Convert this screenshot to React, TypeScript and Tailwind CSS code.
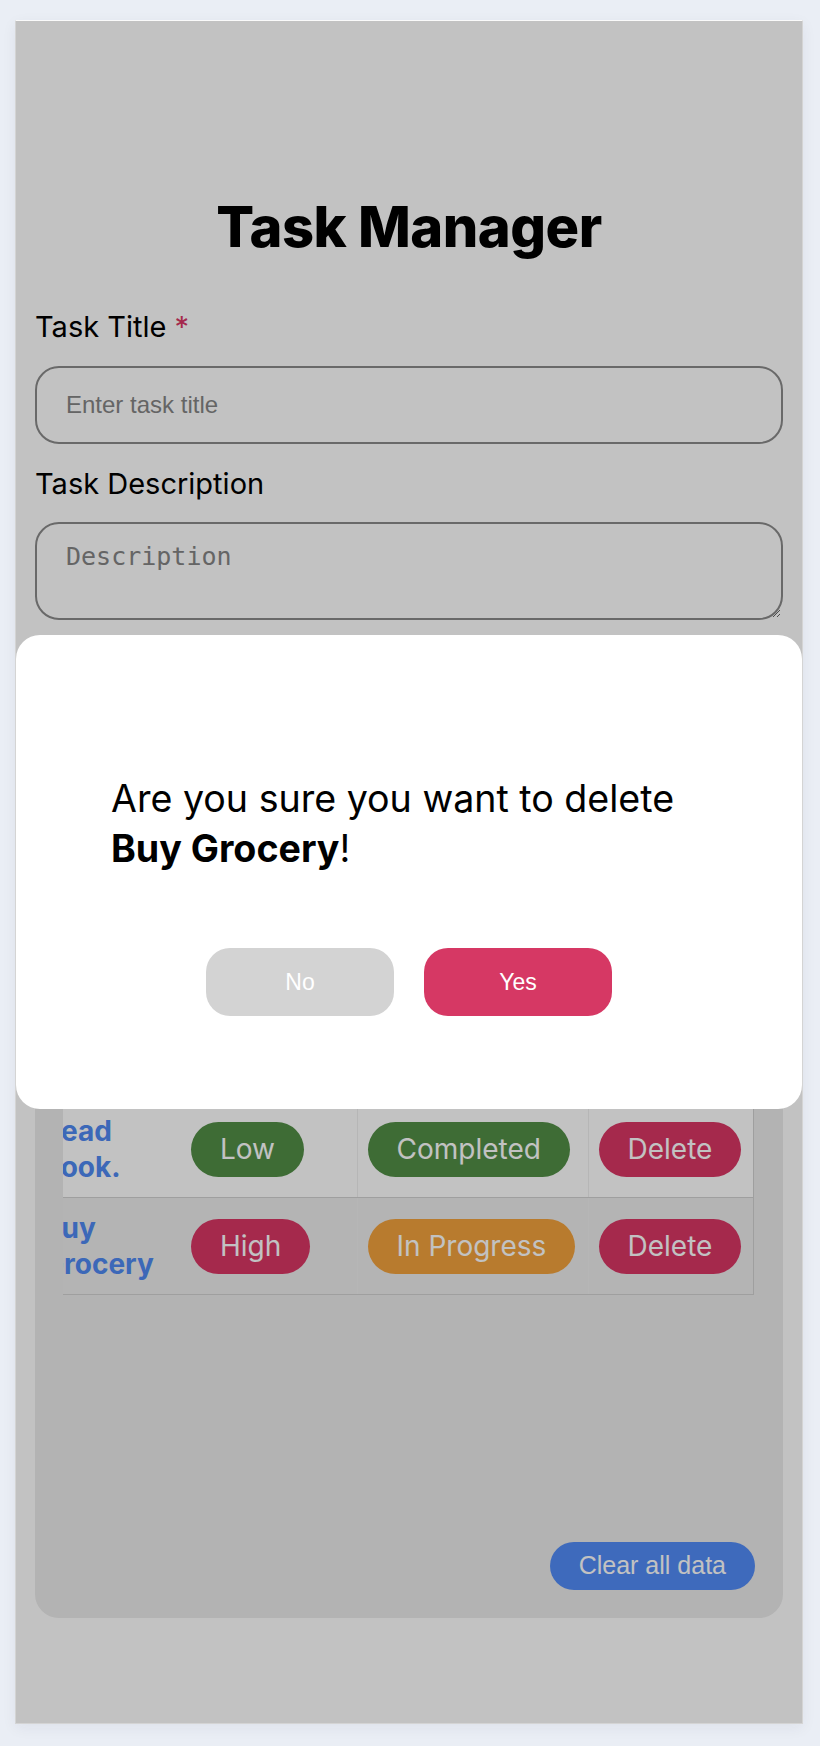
import { useLayoutEffect, useRef } from 'react'

type Priority = 'Low' | 'Medium' | 'High'
type Status = 'To Do' | 'In Progress' | 'Completed'

interface Task {
  id: number
  title: string
  priority: Priority
  status: Status
}

const tasks: Task[] = [
  { id: 1, title: 'Read book.', priority: 'Low', status: 'Completed' },
  { id: 2, title: 'Buy Grocery', priority: 'High', status: 'In Progress' },
]

const priorityColor: Record<Priority, string> = {
  Low: 'bg-[#528e46]',
  Medium: 'bg-[#f2a23d]',
  High: 'bg-[#d93665]',
}

const statusColor: Record<Status, string> = {
  'To Do': 'bg-[#8a8a8a]',
  'In Progress': 'bg-[#f2a23d]',
  Completed: 'bg-[#528e46]',
}

const inter = "font-['Inter','Noto_Sans',sans-serif]"
const arial = "font-['Liberation_Sans',Arial,sans-serif]"

function Pill({ label, color }: { label: string; color: string }) {
  return (
    <span className={`inline-block whitespace-nowrap rounded-full px-[29px] py-[10px] text-[28px] leading-[35px] text-white ${color}`}>
      {label}
    </span>
  )
}

function TaskTable() {
  const scrollRef = useRef<HTMLDivElement>(null)

  // table is wider than the panel, keep it scrolled to the right edge
  useLayoutEffect(() => {
    const el = scrollRef.current
    if (el) el.scrollLeft = el.scrollWidth
  }, [])

  return (
    <div ref={scrollRef} className="h-[472px] overflow-x-auto overflow-y-hidden [scrollbar-width:none]">
      <div className="w-[722px] pr-[2px]">
        <table className="w-[720px] table-fixed border-r border-[#d2d2d2]">
          <colgroup>
            <col className="w-[148px]" />
            <col className="w-[176px]" />
            <col className="w-[231px]" />
            <col className="w-[165px]" />
          </colgroup>
          <thead>
            <tr className="bg-[#f4f4f4] text-left text-[26px] leading-[36px]">
              <th className="border-b border-[#d2d2d2] px-[10px] py-[17px] font-semibold">Title</th>
              <th className="border-b border-[#d2d2d2] px-[10px] py-[17px] font-semibold">Priority</th>
              <th className="border-b border-l border-[#d2d2d2] px-[10px] py-[17px] font-semibold">Status</th>
              <th className="border-b border-l border-[#d2d2d2] px-[10px] py-[17px] font-semibold">Action</th>
            </tr>
          </thead>
          <tbody>
            {tasks.map((task, i) => (
              <tr key={task.id} className={i % 2 === 0 ? 'bg-white' : 'bg-[#ededed]'}>
                <td className="border-b border-[#d2d2d2] px-[10px] py-3 text-[28px] font-bold leading-[36px] text-[#5089f2]">
                  {task.title}
                </td>
                <td className="border-b border-[#d2d2d2] px-[10px] py-3 align-middle">
                  <Pill label={task.priority} color={priorityColor[task.priority]} />
                </td>
                <td className="border-b border-l border-b-[#d2d2d2] border-l-[#f0f0f0] px-[10px] py-3 align-middle">
                  <Pill label={task.status} color={statusColor[task.status]} />
                </td>
                <td className="border-b border-l border-b-[#d2d2d2] border-l-[#f0f0f0] px-[10px] py-3 align-middle">
                  <button className="whitespace-nowrap rounded-full bg-[#d93665] px-[29px] py-[10px] text-[28px] leading-[35px] text-white">
                    Delete
                  </button>
                </td>
              </tr>
            ))}
          </tbody>
        </table>
      </div>
    </div>
  )
}

function ConfirmDialog({ title }: { title: string }) {
  return (
    <div className="absolute inset-0 flex items-center bg-black/[0.24]">
      <div className="w-full rounded-3xl bg-white px-[95px] pb-[93px] pt-[139px]">
        <p className="text-[37.6px] leading-[50px] text-black">
          Are you sure you want to delete <span className="font-bold">{title}</span>!
        </p>
        <div className="mt-[74px] flex justify-center gap-[30px]">
          <button className={`h-[68px] w-[188px] rounded-3xl bg-[#d3d3d3] text-[23px] text-white ${arial}`}>No</button>
          <button className={`h-[68px] w-[188px] rounded-3xl bg-[#d63864] text-[23px] text-white ${arial}`}>Yes</button>
        </div>
      </div>
    </div>
  )
}

export default function App() {
  const fieldClass = `block w-full rounded-3xl border-2 border-[#8a8a8a] bg-transparent px-[29px] text-[24px] text-black placeholder:text-[#858585] outline-none ${arial}`

  return (
    <div className={`min-h-screen bg-[#eaeef5] pb-[22px] pt-5 ${inter}`}>
      <div className="relative ml-[15px] w-[788px] border border-[#d4d4d4] border-t-[#fafafa] bg-white shadow-[0_4px_14px_rgba(30,40,70,0.06)]">
        <div className="px-[19px] pb-[105px] pt-[172px]">
          <h1 className="text-center text-[56px] font-extrabold leading-[68px] tracking-[-0.5px] text-black">Task Manager</h1>

          <form className="mt-[48px]" onSubmit={(e) => e.preventDefault()}>
            <label className="mb-[22px] block text-[29px] leading-[35px] text-black">
              Task Title <span className="text-[#d93665]">*</span>
            </label>
            <input type="text" placeholder="Enter task title" className={`${fieldClass} mb-[22px] h-[78px]`} />

            <label className="mb-[21px] block text-[29px] leading-[35px] text-black">Task Description</label>
            <textarea
              placeholder="Description"
              className="mb-[22px] block h-[98px] w-full rounded-3xl border-2 border-[#8a8a8a] bg-transparent px-[29px] pt-[18px] font-['DejaVu_Sans_Mono',monospace] text-[25px] leading-[29px] placeholder:text-[#858585] outline-none"
            />

            <div className="grid grid-cols-2 gap-5">
              <div>
                <label className="mb-[21px] block text-[29px] leading-[35px] text-black">Priority</label>
                <select className={`${fieldClass} h-[78px]`} defaultValue="Low">
                  <option>Low</option>
                  <option>Medium</option>
                  <option>High</option>
                </select>
              </div>
              <div>
                <label className="mb-[21px] block text-[29px] leading-[35px] text-black">Status</label>
                <select className={`${fieldClass} h-[78px]`} defaultValue="To Do">
                  <option>To Do</option>
                  <option>In Progress</option>
                  <option>Completed</option>
                </select>
              </div>
            </div>

            <button type="submit" className={`mt-[28px] h-[68px] w-full rounded-3xl bg-[#528cf7] text-[24px] text-white ${arial}`}>
              Add Task
            </button>
          </form>

          <div className="mt-[58px] rounded-3xl bg-[#ebebeb] p-7">
            <h2 className="mb-[28px] text-[32px] font-bold leading-[44px]">Tasks</h2>
            <TaskTable />
            <div className="mt-10 flex justify-end">
              <button className={`h-[48px] rounded-full bg-[#528cf7] px-[29px] text-[25px] text-white ${arial}`}>
                Clear all data
              </button>
            </div>
          </div>
        </div>

        <ConfirmDialog title="Buy Grocery" />
      </div>
    </div>
  )
}
